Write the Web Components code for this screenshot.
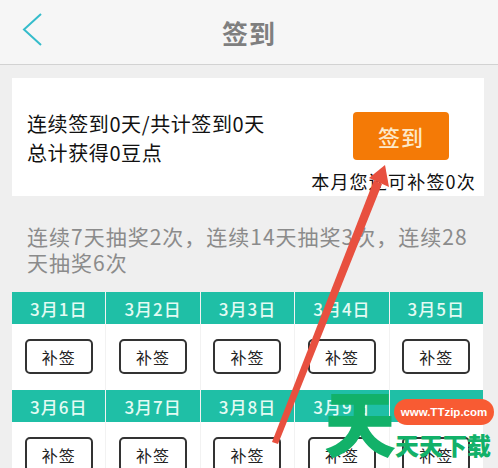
<!DOCTYPE html>
<html lang="zh">
<head>
<meta charset="utf-8">
<title>签到</title>
<style>
    html, body { margin: 0; height: 468px; overflow: hidden; }
    body {
        position: relative;
        background: #efefef;
        font-family: "Noto Sans CJK SC", "Liberation Sans", sans-serif;
    }
</style>
</head>
<body>
<app-header>签到</app-header>
<sign-card></sign-card>
<rule-note>连续7天抽奖2次，连续14天抽奖3次，连续28天抽奖6次</rule-note>
<day-grid></day-grid>
<red-arrow></red-arrow>
<site-mark></site-mark>

<script>
class AppHeader extends HTMLElement {
    constructor() {
        super();
        this.shadowDOM = this.attachShadow({ mode: 'open' });
    }
    connectedCallback() {
        this.shadowDOM.innerHTML = `
            <style>
                :host {
                    display: flex;
                    align-items: center;
                    justify-content: center;
                    position: relative;
                    height: 64px;
                    background: #f6f6f6;
                    border-bottom: 1px solid #d2d2d2;
                    color: #7f7f7f;
                    font-size: 26px;
                    font-weight: 700;
                    letter-spacing: 1px;
                }
                svg { position: absolute; left: 22px; top: 12px; }
            </style>
            <svg width="22" height="36" viewBox="0 0 22 36" fill="none">
                <path d="M19 2 2 17.5 19 33" stroke="#35bccb" stroke-width="2"/>
            </svg>
            <slot></slot>
        `;
    }
}

class SignCard extends HTMLElement {
    constructor() {
        super();
        this.shadowDOM = this.attachShadow({ mode: 'open' });
    }
    connectedCallback() {
        this.shadowDOM.innerHTML = `
            <style>
                :host {
                    display: flex;
                    justify-content: space-between;
                    box-sizing: border-box;
                    height: 118px;
                    margin: 13px 14px 0 12px;
                    padding: 31px 8px 0 15px;
                    background: #fff;
                    color: #111;
                }
                .info { font-size: 20px; line-height: 29px; letter-spacing: .6px; }
                .side { display: flex; flex-direction: column; align-items: flex-end; }
                button {
                    width: 96px;
                    height: 48px;
                    margin: 3px 27px 0 0;
                    padding: 0;
                    border: none;
                    border-radius: 4px;
                    background: #f47a06;
                    color: #fde9c8;
                    font: 500 22px "Noto Sans CJK SC", sans-serif;
                    letter-spacing: 1px;
                }
                .left { margin-top: 8px; font-size: 18px; line-height: 26px; letter-spacing: 1.2px; white-space: nowrap; }
            </style>
            <div class="info">连续签到0天/共计签到0天<br>总计获得0豆点</div>
            <div class="side">
                <button>签到</button>
                <div class="left">本月您还可补签0次</div>
            </div>
        `;
    }
}

class RuleNote extends HTMLElement {
    constructor() {
        super();
        this.shadowDOM = this.attachShadow({ mode: 'open' });
    }
    connectedCallback() {
        this.shadowDOM.innerHTML = `
            <style>
                :host {
                    display: block;
                    margin: 27px 24px 0 27px;
                    color: #8b8b8b;
                    font-size: 21px;
                    line-height: 26px;
                    letter-spacing: 1px;
                }
            </style>
            <slot></slot>
        `;
    }
}

class DayCell extends HTMLElement {
    constructor() {
        super();
        this.shadowDOM = this.attachShadow({ mode: 'open' });
    }
    connectedCallback() {
        this.shadowDOM.innerHTML = `
            <style>
                :host { display: block; background: #fff; }
                .date {
                    display: flex;
                    align-items: center;
                    justify-content: center;
                    height: 32px;
                    background: #1fbfa6;
                    color: #e4fbf4;
                    font-size: 17px;
                    font-weight: 500;
                    letter-spacing: 1px;
                }
                .body { display: flex; justify-content: center; padding: 15px 0 16px; }
                .btn {
                    display: flex;
                    align-items: center;
                    justify-content: center;
                    box-sizing: border-box;
                    width: 68px;
                    height: 35px;
                    border: 2px solid #333;
                    border-radius: 5px;
                    color: #222;
                    font-size: 16px;
                    letter-spacing: 1px;
                }
            </style>
            <div class="date">${this.getAttribute('date')}</div>
            <div class="body"><div class="btn">补签</div></div>
        `;
    }
}

class DayGrid extends HTMLElement {
    constructor() {
        super();
        this.shadowDOM = this.attachShadow({ mode: 'open' });
    }
    connectedCallback() {
        let cells = '';
        for (let d = 1; d <= 10; d++) {
            cells += `<day-cell date="3月${d}日"></day-cell>`;
        }
        this.shadowDOM.innerHTML = `
            <style>
                :host {
                    display: grid;
                    grid-template-columns: repeat(5, 1fr);
                    gap: 0 1px;
                    margin: 17px 15px 0 12px;
                    background: #f2f2f2;
                }
            </style>
            ${cells}
        `;
    }
}

class RedArrow extends HTMLElement {
    constructor() {
        super();
        this.shadowDOM = this.attachShadow({ mode: 'open' });
    }
    connectedCallback() {
        this.shadowDOM.innerHTML = `
            <style>
                :host { position: absolute; left: 0; top: 0; pointer-events: none; }
                svg { display: block; }
            </style>
            <svg width="498" height="468" viewBox="0 0 498 468" fill="none">
                <path d="M272 442 278 444 382 184 374 180Z" fill="#e8503f"/>
                <path d="M385 165 369 178 389 187Z" fill="#e8503f"/>
            </svg>
        `;
    }
}

class SiteMark extends HTMLElement {
    constructor() {
        super();
        this.shadowDOM = this.attachShadow({ mode: 'open' });
    }
    connectedCallback() {
        this.shadowDOM.innerHTML = `
            <style>
                :host {
                    position: absolute;
                    left: 326px;
                    top: 390px;
                    width: 172px;
                    height: 78px;
                }
                .big {
                    position: absolute;
                    left: -2px;
                    top: -9px;
                    color: #12b169;
                    font-size: 72px;
                    font-weight: 900;
                    line-height: 78px;
                }
                .pill {
                    position: absolute;
                    left: 68px;
                    top: 9px;
                    width: 100px;
                    height: 26px;
                    border-radius: 13px;
                    background: #f85b33;
                    color: #fff;
                    font: 700 11.5px/26px "Liberation Sans", sans-serif;
                    text-align: center;
                }
                .small {
                    position: absolute;
                    left: 69px;
                    top: 38px;
                    color: #12b169;
                    font-size: 24px;
                    font-weight: 900;
                    line-height: 34px;
                    white-space: nowrap;
                }
            </style>
            <div class="big">天</div>
            <div class="pill">www.TTzip.com</div>
            <div class="small">天天下载</div>
        `;
    }
}

customElements.define('app-header', AppHeader);
customElements.define('sign-card', SignCard);
customElements.define('rule-note', RuleNote);
customElements.define('day-cell', DayCell);
customElements.define('day-grid', DayGrid);
customElements.define('red-arrow', RedArrow);
customElements.define('site-mark', SiteMark);
</script>
</body>
</html>
